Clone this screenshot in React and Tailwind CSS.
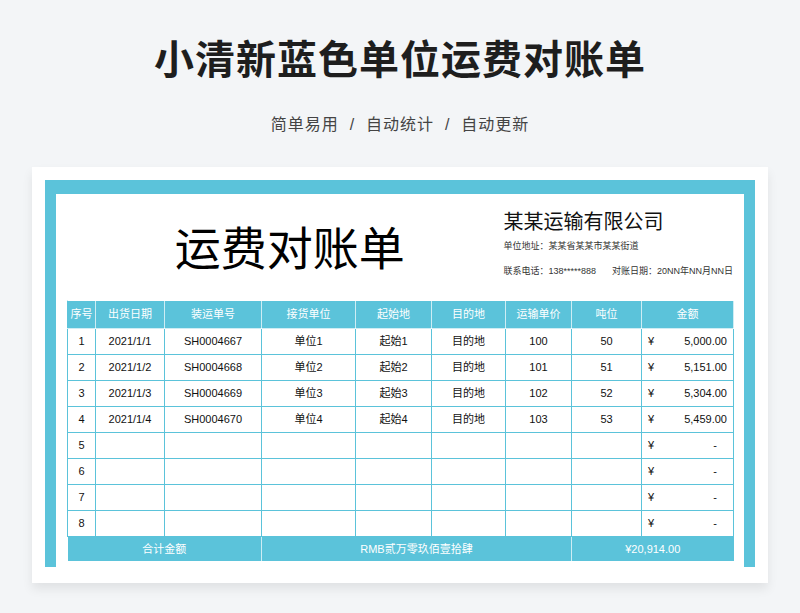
const rows = [
  ["1", "2021/1/1", "SH0004667", "单位1", "起始1", "目的地", "100", "50", "5,000.00"],
  ["2", "2021/1/2", "SH0004668", "单位2", "起始2", "目的地", "101", "51", "5,151.00"],
  ["3", "2021/1/3", "SH0004669", "单位3", "起始3", "目的地", "102", "52", "5,304.00"],
  ["4", "2021/1/4", "SH0004670", "单位4", "起始4", "目的地", "103", "53", "5,459.00"],
  ["5", "", "", "", "", "", "", "", "-"],
  ["6", "", "", "", "", "", "", "", "-"],
  ["7", "", "", "", "", "", "", "", "-"],
  ["8", "", "", "", "", "", "", "", "-"],
];
const heads = ["序号", "出货日期", "装运单号", "接货单位", "起始地", "目的地", "运输单价", "吨位", "金额"];
const widths = [28, 69, 97, 94, 76, 74, 66, 70, 92];
const font = { fontFamily: '"Liberation Sans", "Noto Sans CJK SC", sans-serif' };

export default function App() {
  return (
    <div className="w-[800px] h-[613px] bg-[#f3f5f7] flex flex-col items-center" style={font}>
      <h1 className="mt-[36px] text-[40px] leading-[48px] font-bold text-[#1e1e1e] tracking-[1px]">小清新蓝色单位运费对账单</h1>
      <p className="mt-[31px] text-[16px] leading-[20px] text-[#444] tracking-[1px] whitespace-pre">简单易用  /  自动统计  /  自动更新</p>
      <div className="mt-[32px] w-[736px] h-[416px] bg-white shadow-[0_6px_10px_rgba(0,0,0,0.08)] pt-[13px] px-[13px]">
        <div className="h-[387px] border-[#5bc3da] border-t-[14px] border-x-[11px] bg-white px-[11px]">
          <div className="h-[106px] flex">
            <div className="w-[430px] flex items-center justify-center pl-[20px] pt-[4px] text-[46px] text-black">运费对账单</div>
            <div className="flex flex-col pl-[11px] pt-[14px]">
              <div className="text-[20px] leading-[28px] text-[#111]">某某运输有限公司</div>
              <div className="mt-[4px] text-[9px] text-[#333] whitespace-nowrap">单位地址：某某省某某市某某街道</div>
              <div className="mt-[11px] text-[9px] text-[#333] flex gap-[16px] whitespace-nowrap"><span>联系电话：138*****888</span><span>对账日期：20NN年NN月NN日</span></div>
            </div>
          </div>
          <table className="border-collapse text-[11px] text-[#111] table-fixed w-[666px]">
            <colgroup>{widths.map((w, i) => <col key={i} style={{ width: w }} />)}</colgroup>
            <thead>
              <tr className="h-[28px] bg-[#5bc3da] text-white">
                {heads.map((h) => <th key={h} className="font-normal border border-[#ffffff]/70 first:border-l-[#5bc3da]">{h}</th>)}
              </tr>
            </thead>
            <tbody>
              {rows.map((r) => (
                <tr key={r[0]} className="h-[26px]">
                  {r.slice(0, 8).map((c, i) => <td key={i} className="border border-[#5bc3da] text-center">{c}</td>)}
                  <td className="border border-[#5bc3da] px-[6px]">
                    <div className="flex justify-between"><span>¥</span><span className={r[8] === "-" ? "pr-[10px]" : ""}>{r[8]}</span></div>
                  </td>
                </tr>
              ))}
              <tr className="h-[24px] bg-[#5bc3da] text-white">
                <td colSpan={3} className="text-center border-r border-white/70">合计金额</td>
                <td colSpan={4} className="text-center border-r border-white/70">RMB贰万零玖佰壹拾肆</td>
                <td colSpan={2} className="text-center">¥20,914.00</td>
              </tr>
            </tbody>
          </table>
        </div>
      </div>
    </div>
  );
}
